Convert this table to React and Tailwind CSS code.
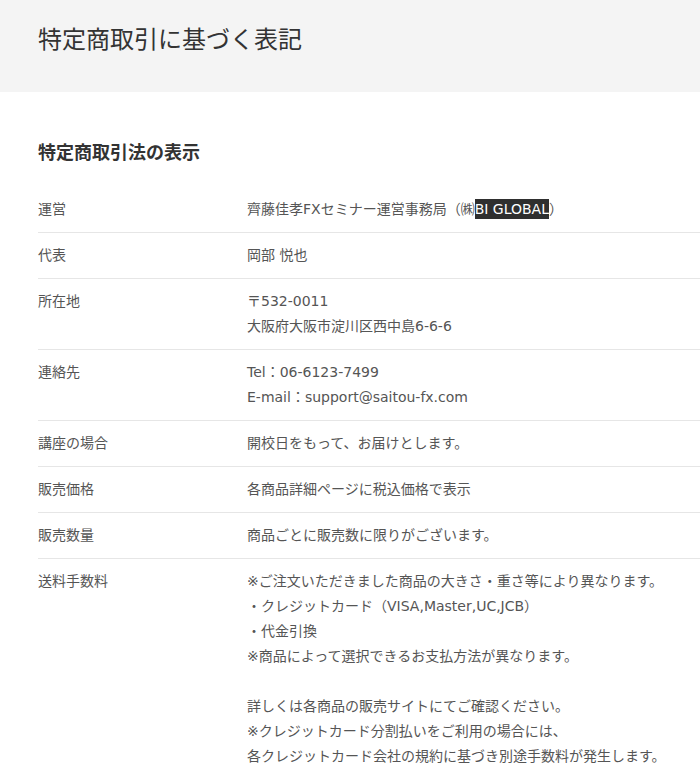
const ROWS = [
  { label: '運営', lines: [<>齊藤佳孝FXセミナー運営事務局（㈱<span className="bg-[#2f2f2f] text-white py-[2px]">BI GLOBAL</span>）</>] },
  { label: '代表', lines: ['岡部 悦也'] },
  { label: '所在地', lines: ['〒532-0011', '大阪府大阪市淀川区西中島6-6-6'] },
  { label: '連絡先', lines: ['Tel：06-6123-7499', 'E-mail：support@saitou-fx.com'] },
  { label: '講座の場合', lines: ['開校日をもって、お届けとします。'] },
  { label: '販売価格', lines: ['各商品詳細ページに税込価格で表示'] },
  { label: '販売数量', lines: ['商品ごとに販売数に限りがございます。'] },
  {
    label: '送料手数料',
    lines: [
      '※ご注文いただきました商品の大きさ・重さ等により異なります。',
      '・クレジットカード（VISA,Master,UC,JCB）',
      '・代金引換',
      '※商品によって選択できるお支払方法が異なります。',
      '',
      '詳しくは各商品の販売サイトにてご確認ください。',
      '※クレジットカード分割払いをご利用の場合には、',
      '各クレジットカード会社の規約に基づき別途手数料が発生します。',
    ],
  },
]

export default function App() {
  return (
    <div className="min-h-[778px] bg-white text-[#555] font-['DejaVu_Sans','Noto_Sans_CJK_JP',sans-serif]">
      <header className="h-[92px] bg-[#f4f4f4] pl-[38px] pt-[23px]">
        <h1 className="text-[24px] leading-[34px] font-normal text-[#333]">特定商取引に基づく表記</h1>
      </header>

      <section className="pl-[38px] pt-[48px]">
        <h2 className="text-[18px] leading-[26px] font-bold text-[#333] mb-[21px]">特定商取引法の表示</h2>
        <div className="text-[14px] leading-[25px]">
          {ROWS.map(({ label, lines }) => (
            <div key={label} className="flex border-b border-[#e6e6e6] pt-[10px] pb-[10px]">
              <div className="w-[209px] shrink-0">{label}</div>
              <div>
                {lines.map((l, i) => (
                  <div key={i} className="h-[25px] whitespace-nowrap">{l}</div>
                ))}
              </div>
            </div>
          ))}
        </div>
      </section>
    </div>
  )
}
